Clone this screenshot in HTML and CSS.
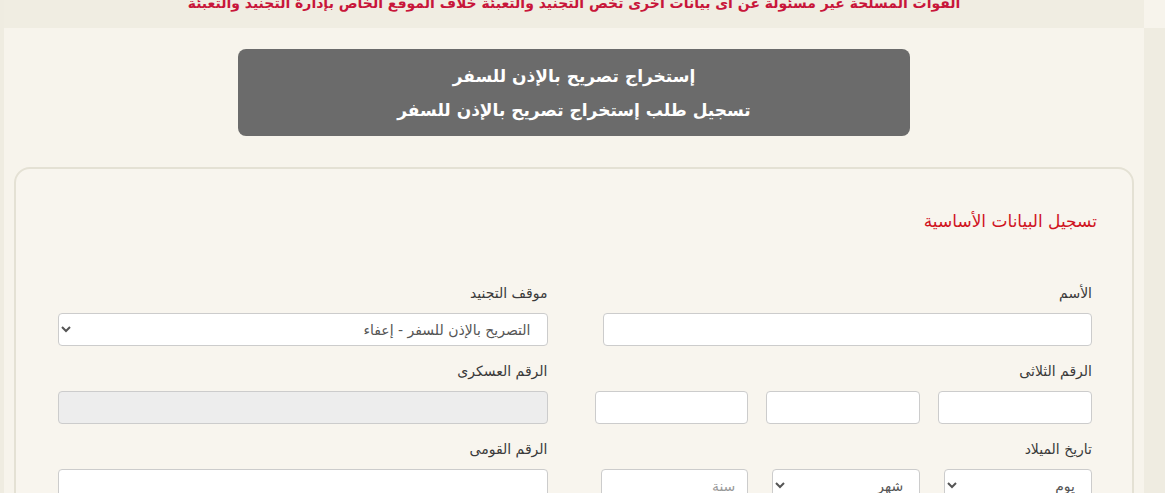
FILE: index.html
```html
<!DOCTYPE html>
<html lang="ar" dir="rtl">
<head>
    <meta charset="UTF-8">
    <meta name="viewport" content="width=device-width, initial-scale=1.0">
    <title>إستخراج تصريح بالإذن للسفر</title>
    <link rel="stylesheet" href="styles.css">
</head>
<body>
    <div class="layout">
        <div class="side side-right"></div>
        <div class="main">
            <div class="notice">
                <p>القوات المسلحة غير مسئولة عن اى بيانات اخرى تخص التجنيد والتعبئة خلاف الموقع الخاص بإدارة التجنيد والتعبئة</p>
            </div>

            <div class="page-title">
                <p>إستخراج تصريح بالإذن للسفر</p>
                <p>تسجيل طلب إستخراج تصريح بالإذن للسفر</p>
            </div>

            <div class="card">
                <h2 class="card-title">تسجيل البيانات الأساسية</h2>

                <div class="form-grid">
                    <div class="field">
                        <label for="name">الأسم</label>
                        <input type="text" id="name">
                    </div>
                    <div class="field">
                        <label for="status">موقف التجنيد</label>
                        <select id="status">
                            <option>التصريح بالإذن للسفر - إعفاء</option>
                        </select>
                    </div>

                    <div class="field">
                        <label>الرقم الثلاثى</label>
                        <div class="triple">
                            <input type="text">
                            <input type="text">
                            <input type="text">
                        </div>
                    </div>
                    <div class="field">
                        <label for="military">الرقم العسكرى</label>
                        <input type="text" id="military" disabled>
                    </div>

                    <div class="field">
                        <label>تاريخ الميلاد</label>
                        <div class="birth">
                            <select><option>يوم</option></select>
                            <select><option>شهر</option></select>
                            <input type="text" placeholder="سنة">
                        </div>
                    </div>
                    <div class="field">
                        <label for="national">الرقم القومى</label>
                        <input type="text" id="national">
                    </div>
                </div>
            </div>
        </div>
        <div class="side side-left"></div>
    </div>
</body>
</html>
```

FILE: styles.css
```css
/* تنسيق الصفحة */
* {
    margin: 0;
    padding: 0;
    box-sizing: border-box;
}

body {
    font-family: "DejaVu Sans", sans-serif;
    background-color: #f7f4ec;
    color: #333;
    font-size: 14px;
}

.layout {
    display: flex;
    min-height: 100vh;
}

.side {
    background-color: #efece1;
}

.side-left {
    width: 4px;
}

.side-right {
    width: 21px;
    margin-top: 28px;
}

.main {
    width: 1140px;
}

.notice {
    background-color: #f0ede2;
    height: 28px;
    overflow: hidden;
    text-align: center;
}

.notice p {
    color: #c8163a;
    font-size: 14px;
    font-weight: bold;
    line-height: 20px;
    margin-top: -7px;
}

.page-title {
    width: 672px;
    margin: 21px auto 0;
    background-color: #6b6b6b;
    border-radius: 8px;
    padding: 10px 0 9px;
    color: #fff;
    text-align: center;
    font-size: 17px;
    font-weight: bold;
    line-height: 34px;
}

.card {
    margin: 31px 10px 0 10px;
    border: 2px solid #e4e1d4;
    border-radius: 16px;
    background-color: #f8f5ee;
    padding: 40px 40px 20px 42px;
}

.card-title {
    color: #d0141f;
    font-size: 17px;
    font-weight: normal;
    line-height: 24px;
    margin-right: -5px;
    margin-bottom: 50px;
}

.form-grid {
    display: grid;
    grid-template-columns: 1fr 1fr;
    column-gap: 55px;
}

.field {
    margin-bottom: 15px;
}

.field label {
    display: block;
    line-height: 20px;
    margin-bottom: 10px;
    color: #3a3a3a;
}

input, select {
    width: 100%;
    height: 33px;
    border: 1px solid #ccc;
    border-radius: 4px;
    background-color: #fff;
    font-family: "DejaVu Sans", sans-serif;
    font-size: 14px;
    color: #555;
    padding: 0 12px;
}

input:disabled {
    background-color: #ededed;
}

input::placeholder {
    color: #999;
}

.triple {
    display: grid;
    grid-template-columns: repeat(3, 1fr);
    column-gap: 18px;
    margin-left: -8px;
}

.birth {
    display: grid;
    grid-template-columns: repeat(3, 1fr);
    column-gap: 24px;
    margin-left: -2px;
}
```
